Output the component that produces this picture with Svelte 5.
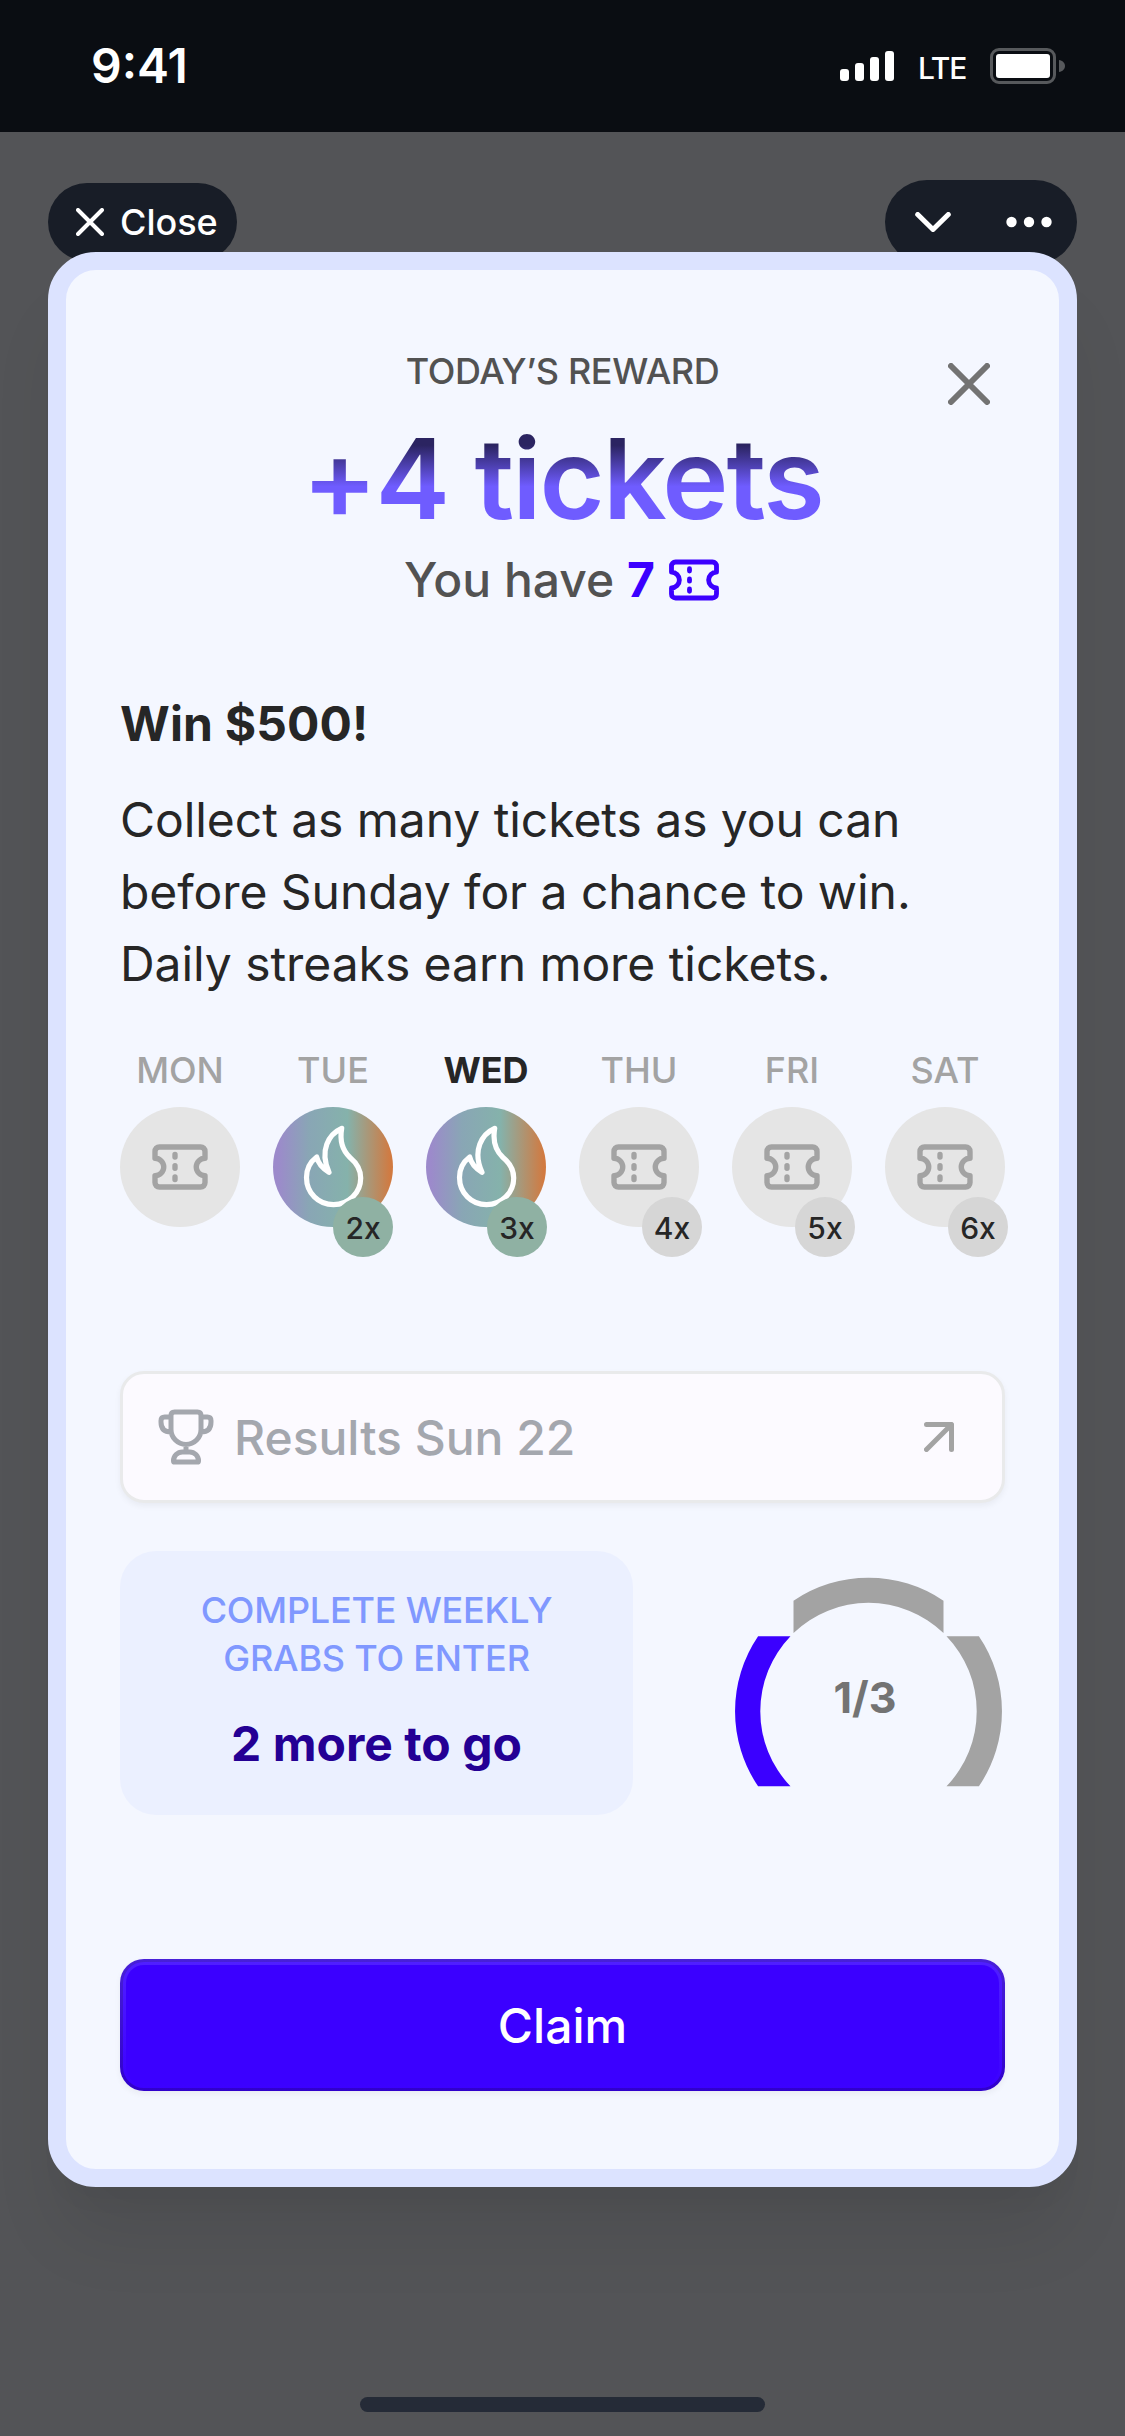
<script>
  const days = [
    { name: 'MON' },
    { name: 'TUE', badge: '2x', lit: true, shift: 0 },
    { name: 'WED', badge: '3x', lit: true, today: true, shift: 1 },
    { name: 'THU', badge: '4x', shift: 3 },
    { name: 'FRI', badge: '5x', shift: 3 },
    { name: 'SAT', badge: '6x', shift: 3 }
  ];
</script>

{#snippet ticket(size)}
  <svg width={size} height={size} viewBox="0 0 24 24" fill="none" stroke="currentColor" stroke-width="2.150" stroke-linecap="round" stroke-linejoin="round">
    <path d="M10 8V7M10 12.5V11.5M10 17V16M3.800 4H20.200C21.300 4 22 4.700 22 5.800V8.500C20.067 8.500 18.500 10.067 18.500 12C18.500 13.933 20.067 15.500 22 15.500V18.200C22 19.300 21.300 20 20.200 20H3.800C2.700 20 2 19.300 2 18.200V15.500C3.933 15.500 5.500 13.933 5.500 12C5.500 10.067 3.933 8.500 2 8.500V5.800C2 4.700 2.700 4 3.800 4Z" />
  </svg>
{/snippet}

<div class="screen">
  <div class="status">
    <span class="time">9:41</span>
    <div class="indicators">
      <svg width="54" height="30" viewBox="0 0 54 30" fill="#fff">
        <rect x="0" y="18" width="9" height="12" rx="3" />
        <rect x="15" y="12" width="9" height="18" rx="3" />
        <rect x="30" y="6" width="9" height="24" rx="3" />
        <rect x="45" y="0" width="9" height="30" rx="3" />
      </svg>
      <span class="lte">LTE</span>
      <svg width="75" height="36" viewBox="0 0 75 36">
        <rect x="1.5" y="1.5" width="63" height="33" rx="7.5" fill="none" stroke="#57595c" stroke-width="3" />
        <rect x="6" y="6" width="54" height="24" rx="3" fill="#fff" />
        <path d="M69 12C72.5 12.5 75 15 75 18S72.5 23.5 69 24Z" fill="#57595c" />
      </svg>
    </div>
  </div>

  <div class="nav">
    <div class="pill close">
      <svg width="28" height="28" viewBox="0 0 28 28" fill="none" stroke="#fff" stroke-width="4" stroke-linecap="round"><path d="M2 2L26 26M26 2L2 26" /></svg>
      <span>Close</span>
    </div>
    <div class="pill more">
      <svg width="36" height="20" viewBox="0 0 36 20" fill="none" stroke="#fff" stroke-width="5" stroke-linecap="round" stroke-linejoin="round"><path d="M2.700 2.500L18 17.500L33.300 2.500" /></svg>
      <svg width="46" height="12" viewBox="0 0 46 12" fill="#fff"><circle cx="5.500" cy="6" r="5.200" /><circle cx="23" cy="6" r="5.200" /><circle cx="40.500" cy="6" r="5.200" /></svg>
    </div>
  </div>

  <div class="card">
    <svg class="dismiss" width="42" height="42" viewBox="0 0 42 42" fill="none" stroke="#737373" stroke-width="6" stroke-linecap="round"><path d="M3 3L39 39M39 3L3 39" /></svg>

    <div class="label">TODAY’S REWARD</div>
    <div class="reward">+4 tickets</div>
    <div class="balance"><span>You have <b>7</b></span>{@render ticket(54)}</div>

    <h2>Win $500!</h2>
    <p>Collect as many tickets as you can<br />before Sunday for a chance to win.<br />Daily streaks earn more tickets.</p>

    <div class="days">
      {#each days as day}
        <div class="day">
          <span class="name" class:today={day.today}>{day.name}</span>
          <div class="dot" class:lit={day.lit}>
            {#if day.lit}
              <svg width="120" height="120" viewBox="0 0 120 120" fill="none" stroke="#fff" stroke-width="5.200" stroke-linecap="round" stroke-linejoin="round">
                <path d="M68.700 21.300C56 27 46 43 56 65.300C49 61 45 56 43.700 50C37 55 33.500 62 33.500 70.500C33.500 86 45.500 97.700 60.500 97.700C75.500 97.700 87.700 86 87.700 71C87.700 61 83 55.500 77 50.500C70 44 66.500 34 68.700 21.300Z" />
              </svg>
            {:else}
              {@render ticket(60)}
            {/if}
            {#if day.badge}
              <span class="badge s{day.shift}">{day.badge}</span>
            {/if}
          </div>
        </div>
      {/each}
    </div>

    <div class="results">
      <svg width="60" height="60" viewBox="0 0 24 24" fill="none" stroke="#a4a7ae" stroke-width="2" stroke-linecap="round" stroke-linejoin="round">
        <path d="M12 15C8.686 15 6 12.314 6 9V3.444C6 2.500 6.500 2 7.444 2H16.556C17.500 2 18 2.500 18 3.444V9C18 12.314 15.314 15 12 15ZM12 15V18M18 4H20.500C21.500 4 22 4.500 22 5.500V6C22 8.700 20.700 10 18 10M6 4H3.500C2.500 4 2 4.500 2 5.500V6C2 8.700 3.300 10 6 10M7.444 22H16.556C16.801 22 17 21.801 17 21.556C17 19.592 15.408 18 13.444 18H10.556C8.592 18 7 19.592 7 21.556C7 21.801 7.199 22 7.444 22Z" />
      </svg>
      <span>Results Sun 22</span>
      <svg width="30" height="30" viewBox="0 0 30 30" fill="none" stroke="#a3a3a3" stroke-width="5" stroke-linecap="round" stroke-linejoin="round"><path d="M2.500 27.500L27.500 2.500M2.500 2.500H27.500V27.500" /></svg>
    </div>

    <div class="progress">
      <div class="goal">
        <div class="caption">COMPLETE WEEKLY<br />GRABS TO ENTER</div>
        <div class="remaining">2 more to go</div>
      </div>
      <svg width="270" height="212" viewBox="0 0 270 212">
        <path d="M58.500 23.700A133.500 133.500 0 0 1 208.500 23.700V56A108.200 108.200 0 0 0 58.500 56Z" fill="#a3a3a3" />
        <path d="M23.100 59.300A133.500 133.500 0 0 0 23.100 209.300H55.500A108.200 108.200 0 0 1 55.500 59.300Z" fill="#3b00ff" />
        <path d="M243.900 59.300A133.500 133.500 0 0 1 243.900 209.300H211.500A108.200 108.200 0 0 0 211.500 59.300Z" fill="#a3a3a3" />
        <text x="130" y="135.500" text-anchor="middle">1/3</text>
      </svg>
    </div>

    <div class="claim">Claim</div>
  </div>

  <div class="home"></div>
</div>

<style>
  :global(body) {
    background: #535457;
  }
  .screen {
    width: 1125px;
    height: 2436px;
    box-sizing: border-box;
    overflow: hidden;
    display: flex;
    flex-direction: column;
    background: #535457;
    font-family: Inter, sans-serif;
  }
  svg {
    display: block;
    flex: none;
  }
  .status {
    height: 132px;
    flex: none;
    box-sizing: border-box;
    padding: 0 60px 0 91px;
    display: flex;
    align-items: center;
    justify-content: space-between;
    background: #0a0d12;
    color: #fff;
  }
  .time {
    font-size: 48px;
    font-weight: 600;
    line-height: 134px;
  }
  .indicators {
    display: flex;
    align-items: center;
  }
  .lte {
    width: 96px;
    text-align: center;
    font-size: 30px;
    font-weight: 500;
    letter-spacing: -1.300px;
    line-height: 36px;
    padding-top: 3px;
  }
  .nav {
    height: 120px;
    flex: none;
    box-sizing: border-box;
    padding: 48px 48px 0;
    display: flex;
    justify-content: space-between;
    align-items: flex-start;
  }
  .pill {
    display: flex;
    align-items: center;
    box-sizing: border-box;
    background: #181d27;
    color: #fff;
  }
  .close {
    margin-top: 3px;
    width: 189px;
    height: 78px;
    padding-left: 28px;
    gap: 16px;
    border-radius: 39px;
    font-size: 36px;
    font-weight: 500;
    line-height: 76px;
    white-space: nowrap;
  }
  .more {
    width: 192px;
    height: 84px;
    padding: 0 25px 0 30px;
    justify-content: space-between;
    border-radius: 42px;
  }
  .card {
    position: relative;
    flex: none;
    margin: 0 48px;
    height: 1935px;
    box-sizing: border-box;
    padding: 75px 54px 0;
    border: 18px solid #dce3ff;
    border-radius: 48px;
    background: #f4f7ff;
    box-shadow: 0 60px 72px -12px rgba(10, 13, 18, 0.08), 0 24px 24px -12px rgba(10, 13, 18, 0.03);
    display: flex;
    flex-direction: column;
    color: #262626;
    font-size: 48px;
  }
  .dismiss {
    position: absolute;
    top: 93px;
    right: 69px;
  }
  .label {
    text-align: center;
    font-size: 36px;
    font-weight: 500;
    letter-spacing: -0.400px;
    line-height: 52px;
    color: #525252;
  }
  .reward {
    align-self: center;
    margin-top: 15px;
    margin-bottom: 1px;
    font-size: 112px;
    font-weight: 600;
    letter-spacing: -1.900px;
    line-height: 133px;
    background: linear-gradient(180deg, #2b2461 0 25%, #6f5cff 56%);
    -webkit-background-clip: text;
    background-clip: text;
    color: transparent;
  }
  .balance {
    display: flex;
    justify-content: center;
    align-items: center;
    gap: 12px;
    height: 67px;
    line-height: 67px;
    font-weight: 500;
    color: #3b00ff;
  }
  .balance span {
    color: #525252;
  }
  .balance b {
    font-weight: 700;
    color: #3b00ff;
  }
  h2 {
    margin: 75px 0 0;
    font-size: 48px;
    font-weight: 700;
    line-height: 72px;
    letter-spacing: 0.150px;
  }
  p {
    margin: 24px 0 0;
    line-height: 72px;
    letter-spacing: -0.060px;
    white-space: nowrap;
  }
  .days {
    margin-top: 46px;
    display: flex;
    gap: 33px;
  }
  .day {
    width: 120px;
    display: flex;
    flex-direction: column;
    align-items: center;
    gap: 13px;
  }
  .name {
    font-size: 36px;
    font-weight: 500;
    line-height: 48px;
    color: #a3a3a3;
  }
  .name.today {
    font-weight: 700;
    color: #262626;
  }
  .dot {
    position: relative;
    width: 120px;
    height: 120px;
    border-radius: 50%;
    display: flex;
    align-items: center;
    justify-content: center;
    background: #e5e5e5;
    color: #a3a3a3;
  }
  .dot.lit {
    background: linear-gradient(90deg, #9c8acb 4%, #89a6b5 30%, #85b2ab 62%, #d17a41 98%);
  }
  .badge {
    position: absolute;
    right: 0;
    bottom: -30px;
    width: 60px;
    height: 60px;
    border-radius: 50%;
    background: #d6d6d6;
    color: #262626;
    font-size: 30px;
    font-weight: 500;
    line-height: 62px;
    text-align: center;
  }
  .lit .badge {
    background: #8fb1a3;
  }
  .s1 {
    right: -1px;
  }
  .s3 {
    right: -3px;
  }
  .results {
    margin-top: 144px;
    height: 132px;
    box-sizing: border-box;
    border: 3px solid #e9eaeb;
    border-radius: 24px;
    background: #fcfaff;
    box-shadow: 0 3px 6px rgba(10, 13, 18, 0.05);
    padding: 0 48px 0 33px;
    display: flex;
    align-items: center;
    gap: 18px;
    font-weight: 500;
    color: #a4a7ae;
  }
  .results span {
    flex: 1;
  }
  .progress {
    margin-top: 48px;
    display: flex;
    justify-content: space-between;
    align-items: center;
  }
  .goal {
    width: 513px;
    height: 264px;
    box-sizing: border-box;
    padding-top: 35px;
    border-radius: 36px;
    background: #ebf0ff;
    text-align: center;
  }
  .caption {
    font-size: 36px;
    font-weight: 500;
    letter-spacing: -0.200px;
    line-height: 48px;
    color: #8098ff;
  }
  .remaining {
    margin-top: 26px;
    font-weight: 700;
    line-height: 72px;
    color: #240094;
  }
  text {
    font-size: 43px;
    font-weight: 700;
    fill: #737373;
  }
  .claim {
    margin-top: 144px;
    height: 132px;
    box-sizing: border-box;
    padding: 3px;
    border: 3px solid transparent;
    border-radius: 24px;
    background:
      linear-gradient(#3b00ff, #3b00ff) content-box,
      linear-gradient(#501fff, #3b00ff) padding-box,
      linear-gradient(#4820d8, #3000cc) border-box;
    box-shadow: 0 3px 6px rgba(10, 13, 18, 0.05);
    color: #fff;
    font-weight: 500;
    line-height: 122px;
    text-align: center;
  }
  .home {
    flex: none;
    align-self: center;
    margin-top: 210px;
    width: 405px;
    height: 15px;
    border-radius: 8px;
    background: #252b37;
  }
</style>
